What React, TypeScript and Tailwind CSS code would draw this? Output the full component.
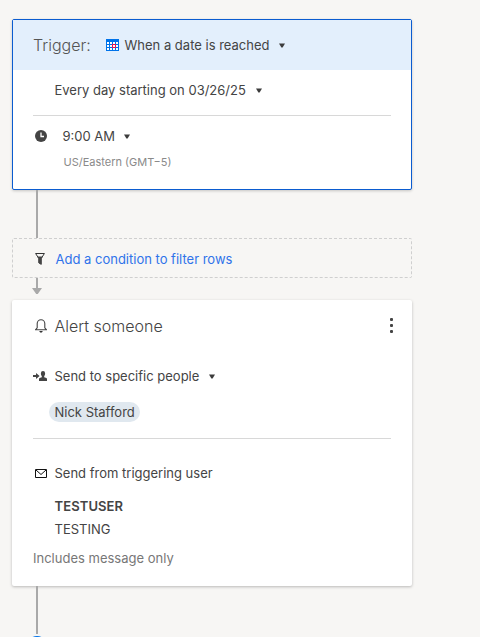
import type { ReactNode } from "react";

interface TextProps {
  children: ReactNode;
  className?: string;
}

function Caret() {
  return (
    <svg width="6" height="5" viewBox="0 0 6 5" className="shrink-0" aria-hidden="true">
      <path d="M0 0.5h6L3.6 4.5H2.4z" fill="#3c3c3c" />
    </svg>
  );
}

function CalendarIcon() {
  return (
    <svg width="13" height="12" viewBox="0 0 13 12" className="shrink-0" shapeRendering="crispEdges">
      <rect width="13" height="12" rx="1" fill="#0073ea" />
      <path
        d="M1 3h2v2H1zM4 3h2v2H4zM7 3h2v2H7zM10 3h2v2h-2zM1 6h2v2H1zM4 6h2v2H4zM10 6h2v2h-2zM1 9h2v2H1zM4 9h2v2H4zM7 9h2v2H7zM10 9h2v2h-2z"
        fill="#fff"
      />
      <path d="M6 5h4v4H6z" fill="#e8114f" />
      <path d="M7 6h2v2H7z" fill="#fff" />
    </svg>
  );
}

function ClockIcon() {
  return (
    <svg width="12" height="12" viewBox="0 0 12 12" className="shrink-0">
      <circle cx="6" cy="6" r="6" fill="#444" />
      <path d="M6 2.5v4h3" fill="none" stroke="#fff" strokeWidth="1.3" />
    </svg>
  );
}

function FilterIcon() {
  return (
    <svg width="10" height="12" viewBox="0 0 10 12" className="shrink-0">
      <path d="M0.6 0.5h8.8L6.2 5.5v5.8L3.8 9.8V5.5z" fill="none" stroke="#333" strokeWidth="1" />
      <path d="M2.2 3.6h5.6L6.4 6v5.6L3.7 10V6z" fill="#444" />
    </svg>
  );
}

function BellIcon() {
  return (
    <svg width="12" height="14" viewBox="0 0 12 14" className="shrink-0">
      <path
        d="M2.2 8.8V4.6a3.8 3.9 0 0 1 7.6 0v4.2l1.6 1.9H0.6z"
        fill="none"
        stroke="#444"
        strokeWidth="1.1"
      />
      <path d="M4.2 12h3.6L6.9 13.6H5.1z" fill="#333" />
    </svg>
  );
}

function SendToIcon() {
  return (
    <svg width="14" height="10" viewBox="0 0 14 10" className="shrink-0" fill="#444">
      <path d="M0 4.1h3V2l3.6 3L3 8V5.9H0z" />
      <path d="M10 0a2.1 2.3 0 0 1 2.1 2.4c0 1.3-.5 2.1-.9 2.6v1.2l2.2.8q.6.3.6 1V10H6V8q0-.7.6-1l2.2-.8V5c-.4-.5-.9-1.3-.9-2.6A2.1 2.3 0 0 1 10 0z" />
    </svg>
  );
}

function MailIcon() {
  return (
    <svg width="12" height="9" viewBox="0 0 12 9" className="shrink-0" fill="none" stroke="#111">
      <path d="M0.5 0.5h11v8H0.5z" />
      <path d="M1 1l5 4.5L11 1" />
    </svg>
  );
}

function Label({ children, className = "" }: TextProps) {
  return <span className={`whitespace-nowrap text-[13px] leading-5 ${className}`}>{children}</span>;
}

function TriggerCard() {
  return (
    <section className="h-[171px] w-[400px] shrink-0 rounded-[2px] border border-[#0b5cd0] bg-white shadow-[0_1px_3px_rgba(0,0,0,0.2)]">
      <header className="flex h-[50px] items-center bg-[#e3effc] pl-[20px]">
        <h2 className="w-[73px] whitespace-nowrap text-base font-light text-[#555]">Trigger:</h2>
        <CalendarIcon />
        <Label className="mr-[9.5px] ml-[5.5px]">When a date is reached</Label>
        <Caret />
      </header>
      <div className="mx-[20px] flex h-[46px] items-center border-b border-[#d8d8d8] pb-[5px] pl-[21.5px]">
        <Label className="mr-[10.5px]">Every day starting on 03/26/25</Label>
        <Caret />
      </div>
      <div className="mt-[10px] flex h-5 items-center pl-[22px]">
        <ClockIcon />
        <Label className="mr-[8.5px] ml-[15.5px]">9:00 AM</Label>
        <Caret />
      </div>
      <p className="mt-[8px] pl-[50.5px] text-[11px] leading-4 text-[#8a8a8a]">US/Eastern (GMT−5)</p>
    </section>
  );
}

function AlertCard() {
  return (
    <section className="h-[286px] w-[400px] shrink-0 rounded-[2px] bg-white px-[21px] pt-[14px] shadow-[0_1px_3px_rgba(0,0,0,0.25)]">
      <header className="flex h-6 items-center">
        <div className="flex w-[21.5px] pl-[2px]">
          <BellIcon />
        </div>
        <h2 className="text-base font-light">Alert someone</h2>
        <button className="-mt-px mr-[-2px] ml-auto flex flex-col gap-[3px]" aria-label="More options">
          <span className="size-[3px] rounded-[1px] bg-[#444]" />
          <span className="size-[3px] rounded-[1px] bg-[#444]" />
          <span className="size-[3px] rounded-[1px] bg-[#444]" />
        </button>
      </header>
      <div className="mt-[28px] flex h-5 items-center">
        <SendToIcon />
        <Label className="mr-[9.5px] ml-[7.5px]">Send to specific people</Label>
        <Caret />
      </div>
      <div className="mt-[16px] ml-[16px] flex h-[20px] w-fit items-center rounded-full bg-[#e0e8ef] px-[5.5px]">
        <Label>Nick Stafford</Label>
      </div>
      <hr className="mt-[16px] border-[#d8d8d8]" />
      <div className="mt-[24px] flex h-5 items-center pl-[2px]">
        <MailIcon />
        <Label className="ml-[7.5px]">Send from triggering user</Label>
      </div>
      <div className="mt-[13px] flex flex-col gap-[3px] pl-[21.5px]">
        <Label className="font-semibold tracking-[0.1px]">TESTUSER</Label>
        <Label>TESTING</Label>
      </div>
      <p className="mt-[9px] text-[13px] leading-5 text-[#777]">Includes message only</p>
    </section>
  );
}

export default function App() {
  return (
    <main className="flex h-[637px] w-[480px] flex-col overflow-hidden bg-[#f7f6f4] pt-[19px] pl-[12px] font-['Inter','Liberation_Sans',sans-serif] text-[#444]">
      <TriggerCard />
      <div className="ml-[24px] h-[48px] w-[2px] shrink-0 bg-[#a9a9a9]" />
      <div className="flex h-[40px] w-[400px] shrink-0 items-center rounded-[2px] border border-dashed border-[#cfcfcf] pt-[2px] pl-[22px] text-[#2f73ea]">
        <FilterIcon />
        <Label className="ml-[10.5px]">Add a condition to filter rows</Label>
      </div>
      <svg width="10" height="22" viewBox="0 0 10 22" className="ml-[20px] shrink-0" fill="#a9a9a9">
        <path d="M4 0h2v10h4L5.8 16H4.2L0 10h4z" />
      </svg>
      <AlertCard />
      <div className="ml-[24px] h-[48px] w-[2px] shrink-0 bg-[#a9a9a9]" />
      <div className="mt-[2px] ml-[15px] size-[20px] shrink-0 rounded-full bg-[#0073ea]" />
    </main>
  );
}
